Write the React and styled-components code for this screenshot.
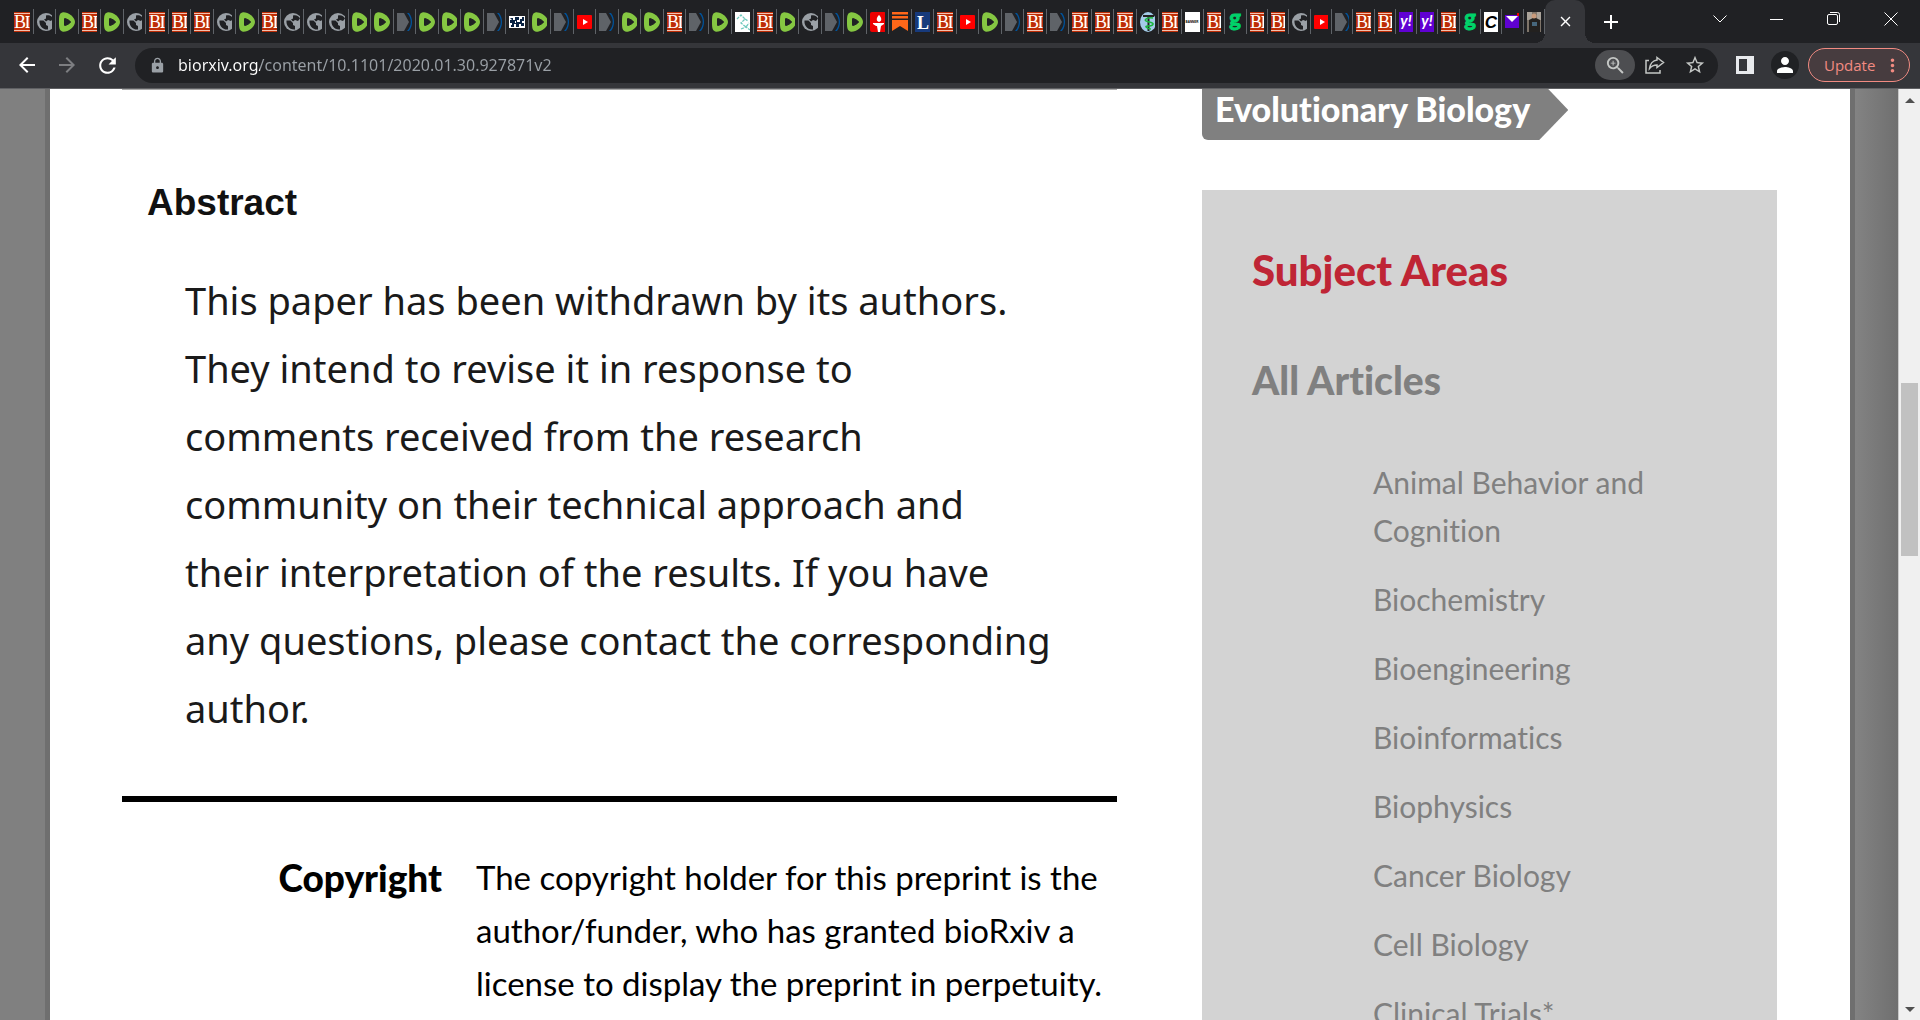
import React from 'react';
import styled, { createGlobalStyle } from 'styled-components';
import { MdArrowBack, MdArrowForward, MdRefresh, MdLock, MdZoomIn, MdStarBorder, MdPerson, MdAdd, MdClose, MdMoreVert } from 'react-icons/md';

const GlobalStyle = createGlobalStyle`
  * { box-sizing:border-box; }
  body { margin:0; background:#808080; overflow:hidden; }
  button, input { font:inherit; color:inherit; }
  h2, h3, p, ul, dl, dd, dt { margin:0; padding:0; }
`;

const Window = styled.div`
  display:flex;
  flex-direction:column;
  height:100vh;
  font-family:'Lato', sans-serif;
  font-variant-ligatures:none;
`;
const TabStrip = styled.div`
  display:flex;
  flex:none;
  height:43px;
  padding-left:11px;
  background:#202124;
  color:#fff;
`;
const TabGroup = styled.div`
  display:flex;
  align-items:center;
  flex:0 1 ${props => props.$width};
  min-width:0;
`;
const Tab = styled.button`
  flex:1 1 0;
  min-width:0;
  height:25px;
  padding:0 3px;
  border:0;
  border-right:1px solid #5f6368;
  background:none;
  overflow:hidden;
  svg { display:block; width:20px; height:20px; }
`;
const Clip = styled.span`
  display:block;
  overflow:hidden;
`;
const ActiveTab = styled.div`
  position:relative;
  display:flex;
  align-items:center;
  justify-content:center;
  flex:none;
  width:40px;
  margin-right:12px;
  border-radius:10px 10px 0 0;
  background:#35363a;
  &::before, &::after {
    content:'';
    position:absolute;
    bottom:0;
    width:10px;
    height:10px;
  }
  &::before { left:-10px; background:radial-gradient(circle at 0 0, transparent 10px, #35363a 10px); }
  &::after { right:-10px; background:radial-gradient(circle at 100% 0, transparent 10px, #35363a 10px); }
`;
const IconButton = styled.button`
  display:flex;
  align-items:center;
  justify-content:center;
  flex:none;
  width:${props => props.$width || '40px'};
  height:${props => props.$height || '30px'};
  padding:0;
  border:0;
  border-radius:15px;
  background:${props => props.$bg || 'transparent'};
  color:${props => props.$color || '#fff'};
`;
const WindowButtons = styled.div`
  display:flex;
  align-items:center;
  height:38px;
  margin-left:auto;
`;
const Toolbar = styled.div`
  display:flex;
  align-items:center;
  flex:none;
  height:46px;
  padding:0 10px 1px 7px;
  border-bottom:1px solid #5f6063;
  background:#35363a;
`;
const AddressBar = styled.label`
  display:flex;
  align-items:center;
  flex:1;
  height:35px;
  margin-left:8px;
  padding:0 3px 0 14px;
  border-radius:18px;
  background:#202124;
  color:#9aa0a6;
`;
const AddressInput = styled.input`
  flex:1;
  min-width:0;
  padding:0 12px;
  border:0;
  outline:0;
  font-family:'Noto Sans', sans-serif;
  font-size:16px;
  color:transparent;
  background:linear-gradient(90deg, #fff 94px, #9aa0a6 94px);
  background-clip:text;
`;
const UpdateButton = styled.button`
  display:flex;
  align-items:center;
  justify-content:space-between;
  width:102px;
  height:34px;
  margin-left:9px;
  padding:0 6px 0 15px;
  border:1px solid #f28b82;
  border-radius:17px;
  background:#473c3f;
  color:#f28b82;
  font-family:'Open Sans', sans-serif;
  font-size:15px;
`;

const Viewport = styled.div`
  display:flex;
  flex:1;
  min-height:0;
  background:#808080;
`;
const Gutter = styled.div`
  flex:0 0 ${props => props.$shade ? '43px' : '45px'};
  background:${props => props.$shade ? 'linear-gradient(90deg, #838383, #6f6f6f)' : '#808080'};
`;
const Page = styled.div`
  display:flex;
  flex:1;
  justify-content:space-between;
  min-width:0;
  padding:0 73px 0 72px;
  border:solid #6f6f6f;
  border-width:0 5px;
  background:#fff;
  overflow:hidden;
`;
const Article = styled.main`
  flex:0 1 995px;
  border-top:1px solid #aaa;
`;
const AbstractSection = styled.section`
  padding:91px 25px 54px;
  border-bottom:6px solid #000;
`;
const AbstractTitle = styled.h2`
  font:bold 37px/44px 'Liberation Sans', sans-serif;
  color:#111;
`;
const AbstractText = styled.p`
  padding:41px 0 0 38px;
  font:38px/68px 'Noto Sans', sans-serif;
  color:#1a1a1a;
`;
const Rights = styled.dl`
  display:flex;
  gap:34px;
  padding-top:49px;
  line-height:53px;
  dt { flex:0 0 320px; text-align:right; font-size:37px; font-weight:900; }
  dd { flex:1; font-size:33px; }
`;
const Sidebar = styled.aside`
  flex:0 1 575px;
`;
const SubjectTag = styled.a`
  position:relative;
  display:inline-block;
  height:51px;
  padding:0 9px 0 13px;
  border-radius:0 0 0 6px;
  background:#808080;
  color:#fff;
  font-size:34px;
  font-weight:900;
  line-height:40px;
  text-decoration:none;
  &::after {
    content:'';
    position:absolute;
    top:0;
    left:calc(100% - 2px);
    width:31px;
    height:51px;
    background:inherit;
    clip-path:polygon(0 0, 11px 0, 31px 21px, 2px 51px, 0 51px);
  }
`;
const SubjectPanel = styled.nav`
  margin-top:50px;
  padding:55px 50px 0;
  background:#d3d3d3;
  color:#808080;
`;
const PanelTitle = styled.h2`
  color:#bf2535;
  font-size:42px;
  font-weight:900;
  line-height:50px;
`;
const PanelSubtitle = styled.h3`
  padding-top:60px;
  font-size:39px;
  font-weight:900;
  line-height:50px;
`;
const SubjectList = styled.ul`
  display:flex;
  flex-direction:column;
  gap:21px;
  padding:53px 60px 0 121px;
  list-style:none;
  font-size:30px;
  line-height:48px;
  a { color:inherit; text-decoration:none; }
`;

const ScrollBar = styled.div`
  display:flex;
  flex-direction:column;
  flex:0 0 22px;
  padding:0 2px 0 2px;
  border-left:1px solid #c8c8c8;
  background:#f0f0f0;
`;
const ScrollArrow = styled.button`
  display:flex;
  align-items:center;
  justify-content:center;
  flex:0 0 22px;
  padding:0;
  border:0;
  background:none;
`;
const Track = styled.div`
  display:grid;
  grid-template-rows:272fr 173fr 442fr;
  flex:1;
`;
const Thumb = styled.div`
  grid-row:2;
  background:#c1c1c1;
`;

const letter = { textAnchor: 'middle', fontWeight: 700 };

const favicons = {
  B: <svg viewBox="0 0 20 20"><rect width="20" height="20" fill="#bd2d06"/><path d="M0 1.500h20M0 18.500h20" stroke="#f3c0ae"/><text x="6" y="16" fontSize="18" fontFamily="Liberation Serif" textAnchor="middle" fill="#fff">B</text><path d="M11.500 4h4v1h-1v10h1v1h-4v-1h1V5h-1z" fill="#fff"/></svg>,
  globe: <svg viewBox="0 0 20 20"><circle cx="9" cy="10" r="9" fill="#9aa0a6"/><path d="M2.500 8.500h4l2.500 2.500v2l2 1v3.500C5 18 2 13 2.500 8.500zM9 3.500c3-1 6 .5 7 3l-2 2.500-3-1-2 1.500-2-2 2-1z" fill="#202124"/></svg>,
  rumble: <svg viewBox="0 0 20 20"><path d="M4 0.300C9 0 16 5 16 10s-7 10-12 9.700C0 19 0 15 0 10S0 1 4 .3z" fill="#85c742"/><path d="M5.500 6.800c0-1.200 6 2 6 3.200s-6 4.500-6 3.200z" fill="#202124" stroke="#202124"/></svg>,
  arrow: <svg viewBox="0 0 20 20"><path d="M0 1h7l5 9-5 9H0z" fill="#5f6368"/><path d="M10 1c5 5 5 13 0 18h2c4-5 4-13 0-18z" fill="#00539b"/></svg>,
  qr: <svg viewBox="0 0 20 20"><rect y="4" width="16" height="12" fill="#fff"/><path d="M1 6h3v2h2V5h4v3H8v2h3V7h2V5h2v4h-2v2h2v3h-3v-2h-2v3H7v-3H5v3H2v-2h1v-2H1V8h2zM6 9v2h1V9z" fill="#0a2343"/></svg>,
  youtube: <svg viewBox="0 0 20 20"><rect y="3" width="15" height="14" rx="1" fill="#f00"/><path d="M6 7l5 3-5 3z" fill="#fff"/></svg>,
  bubbles: <svg viewBox="0 0 20 20"><rect width="20" height="20" fill="#fff"/><path d="M2 7l4-4 4 4-4 4 5 4 3-4M6 17l5-2 4 3M10 7l3 2" stroke="#6fc9bd" fill="none" strokeWidth="1.300" strokeDasharray="3 1"/></svg>,
  torch: <svg viewBox="0 0 20 20"><rect width="16" height="20" rx="2" fill="#ee0000"/><path d="M9 3c3 3 3 6 0 7-3-1-3-4 0-7zM3 11h11v1l-3 2H6l-3-2zM7 14h4l-1 6H8z" fill="#fff"/></svg>,
  substack: <svg viewBox="0 0 20 20"><path d="M0 0h16v2.500H0zM0 4h16v2.500H0zM0 8h16v11l-8-5-8 5z" fill="#ff6719"/></svg>,
  L: <svg viewBox="0 0 20 20"><rect width="20" height="20" fill="#173a7c"/><text x="8" y="17" fontSize="18" fontFamily="Liberation Serif" {...letter} fill="#fff">L</text></svg>,
  medical: <svg viewBox="0 0 20 20"><ellipse cx="8" cy="10" rx="8" ry="10" fill="#a3cbe8"/><path d="M3 4h11M8.500 3v16" stroke="#222" strokeWidth="2"/><path d="M13 6c-7-1-11 3-4 4s4 4-1 4 0 3 3 3" stroke="#19b73b" strokeWidth="1.500" fill="none"/></svg>,
  banner: <svg viewBox="0 0 20 20"><rect width="20" height="20" fill="#fff"/><text x="7" y="11" fontSize="3" fontFamily="Liberation Sans" {...letter}>BANNER</text></svg>,
  g: <svg viewBox="0 0 20 20"><text x="7" y="14" fontSize="22" fontFamily="Lato" {...letter} fill="#00d26a" stroke="#00d26a">g</text></svg>,
  yahoo: <svg viewBox="0 0 20 20"><rect width="20" height="20" fill="#6001d2"/><text x="7" y="14" fontSize="15" fontFamily="Lato" fontStyle="italic" {...letter} fill="#fff">y!</text></svg>,
  C: <svg viewBox="0 0 20 20"><rect width="20" height="20" fill="#fff"/><text x="7" y="16" fontSize="17" fontFamily="Liberation Sans" fontStyle="italic" {...letter}>C</text></svg>,
  mail: <svg viewBox="0 0 20 20"><rect y="3" width="14" height="13" fill="#5f01d1"/><path d="M1 4h12L7 10z" fill="#fff"/><path d="M13 1v3" stroke="#e00" strokeWidth="2"/></svg>,
  photo: <svg viewBox="0 0 20 20"><rect width="20" height="20" fill="#7e7469"/><path d="M0 0h5v8H0zM10 0h5v8h-5z" fill="#aaa39a"/><path d="M2 8l4-2h3l4 2v12H2z" fill="#23211f"/><circle cx="7" cy="4" r="2.500" fill="#c99b7c"/><path d="M5 10h5v4H5z" fill="#47677c"/></svg>,
};

const pinnedTabs = `B globe rumble B rumble globe B B B globe rumble B globe globe globe rumble rumble
  arrow rumble rumble rumble arrow qr rumble arrow youtube arrow rumble rumble B arrow rumble bubbles B rumble
  globe arrow rumble torch substack L B youtube rumble arrow B arrow B B B medical B banner`.split(/\s+/);
const narrowTabs = 'B g B B globe youtube arrow B B yahoo yahoo B g C mail photo'.split(' ');

const subjects = [
  'Animal Behavior and Cognition',
  'Biochemistry',
  'Bioengineering',
  'Bioinformatics',
  'Biophysics',
  'Cancer Biology',
  'Cell Biology',
  'Clinical Trials*',
];

function Tabs({tabs, width}) {
  return (
    <TabGroup $width={width}>
      {tabs.map((name, i) => (
        <Tab key={i} aria-label={`${name} tab`}><Clip>{favicons[name]}</Clip></Tab>
      ))}
    </TabGroup>
  );
}

function BrowserChrome() {
  return (
    <>
      <TabStrip>
        <Tabs tabs={pinnedTabs} width='1193px'/>
        <Tabs tabs={narrowTabs} width='341px'/>
        <ActiveTab>
          <IconButton aria-label="Close tab"><MdClose size={17}/></IconButton>
        </ActiveTab>
        <IconButton $width="28px" $height="43px" aria-label="New tab"><MdAdd size={24}/></IconButton>
        <WindowButtons>
          <IconButton $width="57px" aria-label="Search tabs">
            <svg width="14" height="8" fill="none" stroke="currentColor"><path d="M.5.5L7 7 13.500.5"/></svg>
          </IconButton>
          <IconButton $width="57px" aria-label="Minimize">
            <svg width="13" height="1"><rect width="13" height="1" fill="currentColor"/></svg>
          </IconButton>
          <IconButton $width="57px" aria-label="Restore">
            <svg width="14" height="14" fill="none" stroke="currentColor"><rect x=".5" y="2.500" width="10" height="10" rx="1.500"/><path d="M3 .5h7.500a2 2 0 0 1 2 2V10"/></svg>
          </IconButton>
          <IconButton $width="58px" aria-label="Close">
            <svg width="14" height="14" fill="none" stroke="currentColor"><path d="M.5.5l13 13M13.500.5l-13 13"/></svg>
          </IconButton>
        </WindowButtons>
      </TabStrip>
      <Toolbar>
        <IconButton aria-label="Back"><MdArrowBack size={24}/></IconButton>
        <IconButton $color="#7d7e81" aria-label="Forward"><MdArrowForward size={24}/></IconButton>
        <IconButton aria-label="Reload"><MdRefresh size={25}/></IconButton>
        <AddressBar>
          <MdLock size={17}/>
          <AddressInput aria-label="Address" defaultValue="biorxiv.org/content/10.1101/2020.01.30.927871v2"/>
          <IconButton $bg="#4d4e51" $color="#c4c7c5" aria-label="Zoom"><MdZoomIn size={23}/></IconButton>
          <IconButton $color="#c4c7c5" aria-label="Share">
            <svg width="20" height="19" fill="none" stroke="currentColor" strokeWidth="1.500"><path d="M4 4.500H1V17h14v-3M12 1.500l6.500 5-6.500 5V9c-3.500 0-5.500 1-7.500 3.500C5 8 8 4.500 12 4z"/></svg>
          </IconButton>
          <IconButton $color="#c4c7c5" aria-label="Bookmark"><MdStarBorder size={22}/></IconButton>
        </AddressBar>
        <IconButton $width="53px" aria-label="Side panel">
          <svg width="18" height="18"><path d="M0 0h18v18H0zM3 3v12h8V3z" fill="#e8eaed" fillRule="evenodd"/></svg>
        </IconButton>
        <IconButton $width="28px" $height="28px" $bg="#202124" aria-label="Profile"><MdPerson size={24}/></IconButton>
        <UpdateButton>Update<MdMoreVert size={21}/></UpdateButton>
      </Toolbar>
    </>
  );
}

function App() {
  return (
    <Window>
      <GlobalStyle/>
      <BrowserChrome/>
      <Viewport>
        <Gutter/>
        <Page>
          <Article>
            <AbstractSection>
              <AbstractTitle>Abstract</AbstractTitle>
              <AbstractText>
                This paper has been withdrawn by its authors.<br/>
                They intend to revise it in response to<br/>
                comments received from the research<br/>
                community on their technical approach and<br/>
                their interpretation of the results. If you have<br/>
                any questions, please contact the corresponding<br/>
                author.
              </AbstractText>
            </AbstractSection>
            <Rights>
              <dt>Copyright</dt>
              <dd>
                The copyright holder for this preprint is the<br/>
                author/funder, who has granted bioRxiv a<br/>
                license to display the preprint in perpetuity.
              </dd>
            </Rights>
          </Article>
          <Sidebar>
            <SubjectTag href="#evolutionary-biology">Evolutionary Biology</SubjectTag>
            <SubjectPanel>
              <PanelTitle>Subject Areas</PanelTitle>
              <PanelSubtitle>All Articles</PanelSubtitle>
              <SubjectList>
                {subjects.map(name => <li key={name}><a href="#subject">{name}</a></li>)}
              </SubjectList>
            </SubjectPanel>
          </Sidebar>
        </Page>
        <Gutter $shade/>
        <ScrollBar>
          <ScrollArrow aria-label="Scroll up"><svg width="10" height="5"><path d="M0 5l5-5 5 5z" fill="#505050"/></svg></ScrollArrow>
          <Track><Thumb/></Track>
          <ScrollArrow aria-label="Scroll down"><svg width="10" height="5"><path d="M0 0l5 5 5-5z" fill="#505050"/></svg></ScrollArrow>
        </ScrollBar>
      </Viewport>
    </Window>
  );
}

export default App;
